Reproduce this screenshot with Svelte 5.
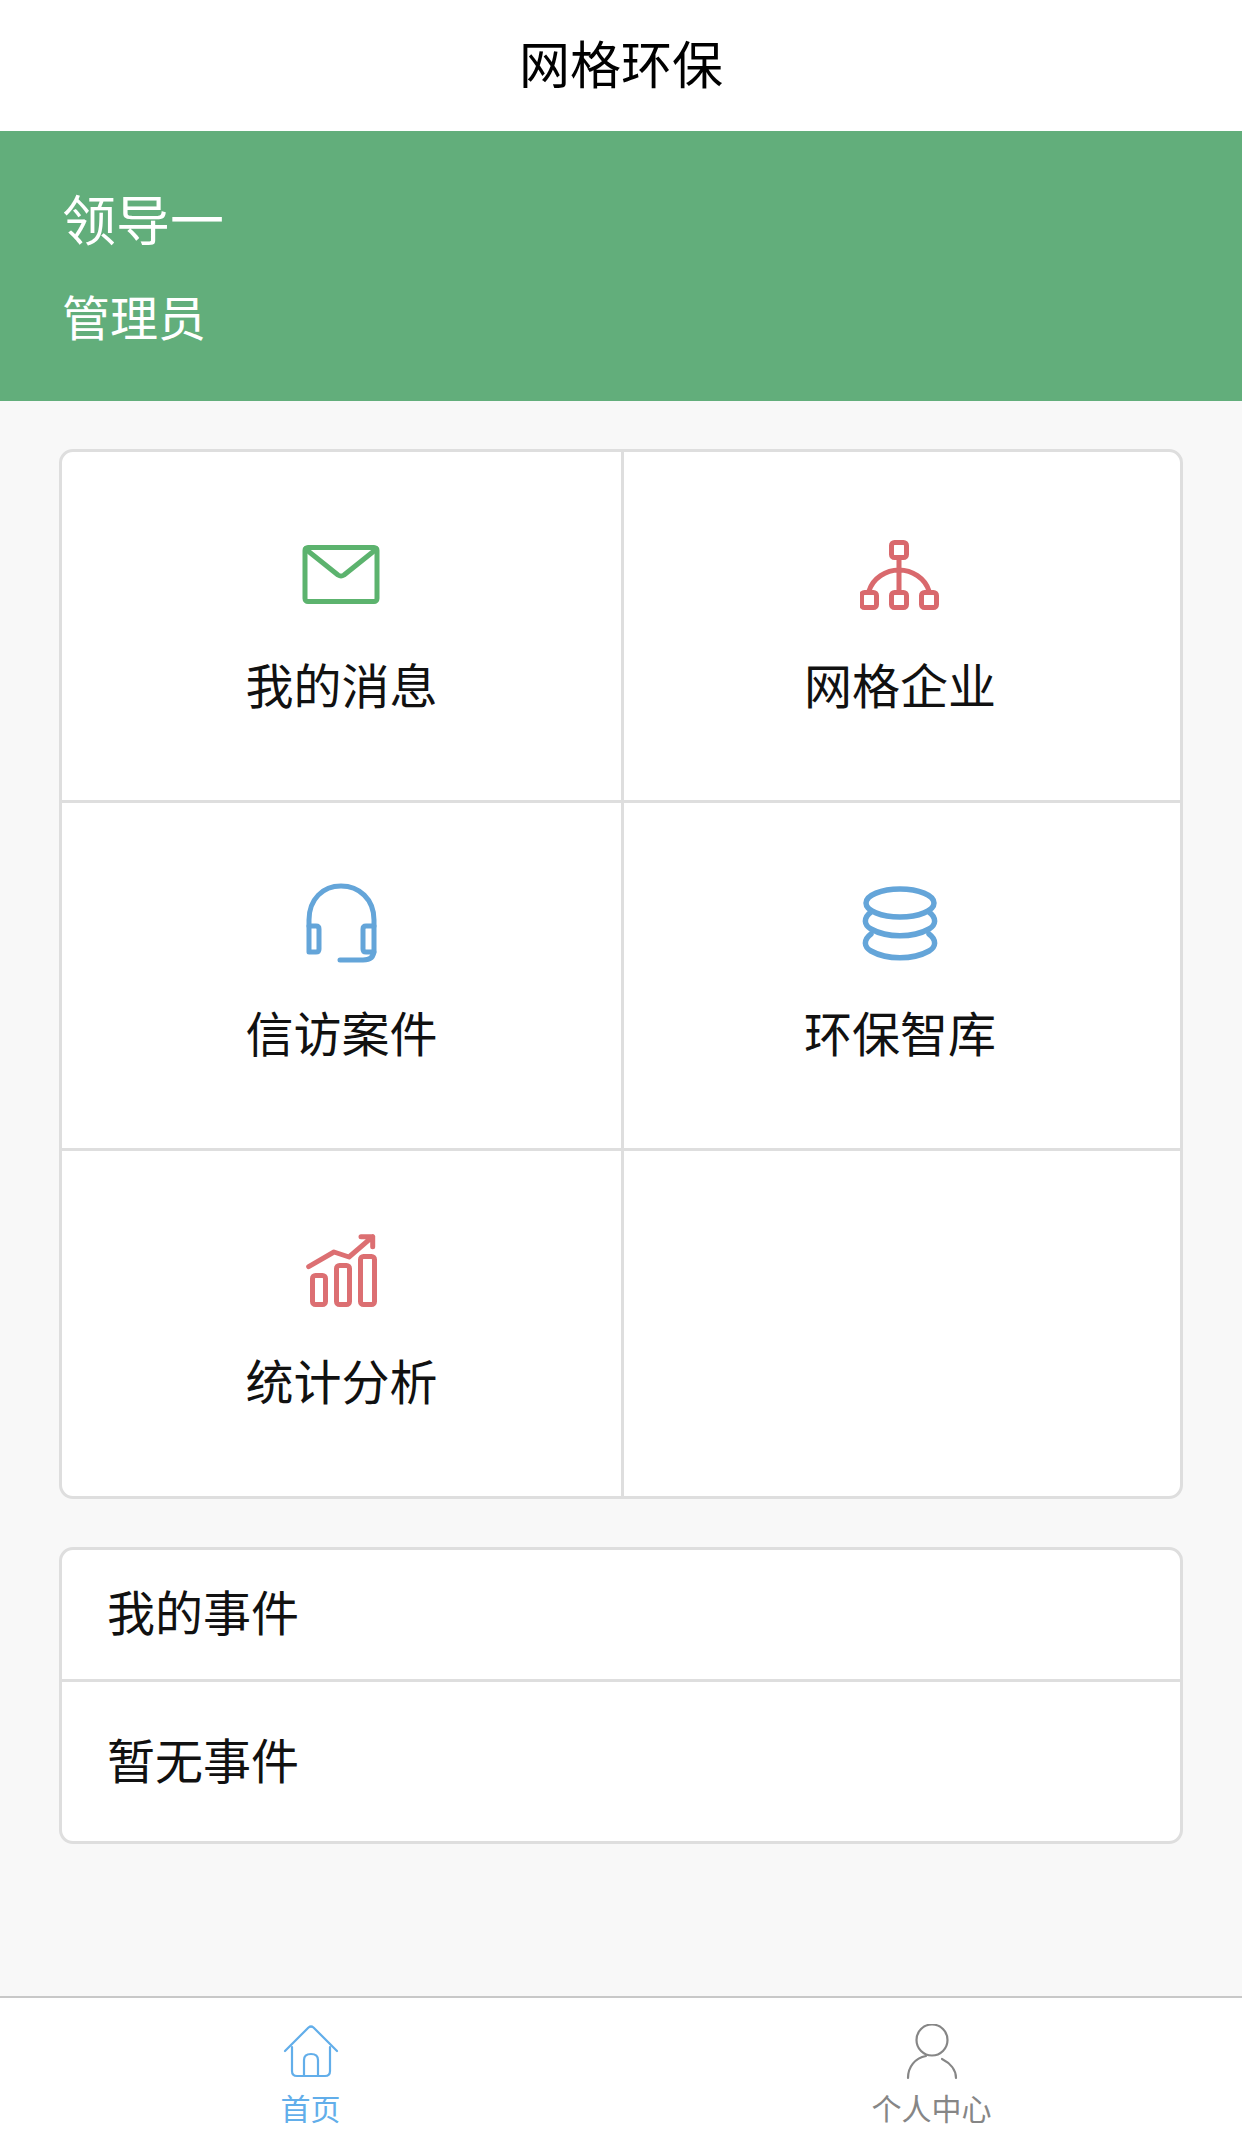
<script>
  const cells = [
    { label: '我的消息', icon: 'mail' },
    { label: '网格企业', icon: 'net' },
    { label: '信访案件', icon: 'headset' },
    { label: '环保智库', icon: 'db' },
    { label: '统计分析', icon: 'chart' },
    { label: '', icon: '' }
  ];
</script>

<div class="page">
  <header class="title">网格环保</header>

  <section class="banner">
    <div class="name">领导一</div>
    <div class="role">管理员</div>
  </section>

  <main class="content">
    <div class="grid">
      {#each cells as cell}
        <div class="cell">
          {#if cell.icon}
            <svg class="icon" viewBox="0 0 80 80" fill="none" stroke-width="5" stroke-linecap="round" stroke-linejoin="round">
              {#if cell.icon === 'mail'}
                <g stroke="#5cb36e">
                  <rect x="3" y="15.5" width="72" height="54" rx="3" />
                  <path d="M3.5 17 L36 43 Q39 45 42 43 L74.5 17" />
                </g>
              {:else if cell.icon === 'net'}
                <g stroke="#d9696d">
                  <rect x="31.5" y="10.5" width="15" height="15" rx="3" />
                  <rect x="1.5" y="60.5" width="15" height="15" rx="3" />
                  <rect x="31.5" y="60.5" width="15" height="15" rx="3" />
                  <rect x="61.5" y="60.5" width="15" height="15" rx="3" />
                  <path d="M39 25.5 V60.5 M9 59 C13 46 26 38 39 38 C52 38 65 46 69 59" />
                </g>
              {:else if cell.icon === 'headset'}
                <g stroke="#64a5d9">
                  <path d="M7 43 V37 C7 16 21 3 39 3 C57 3 72 16 72 37 V67 C72 74 68 77 61 77 H38" />
                  <path d="M7 43 H14 C16 43 17 44 17 46 V66 C17 68 16 69 14 69 H7 Z" />
                  <path d="M72 43 H64 C62 43 61 44 61 46 V66 C61 68 62 69 64 69 H72" />
                </g>
              {:else if cell.icon === 'db'}
                <g stroke="#64a5d9" stroke-width="5.5">
                  <ellipse cx="40" cy="20" rx="34" ry="14" />
                  <path d="M11 29 C3 35 4 42 11 46 C27 55 53 55 69 46 C76 42 77 35 69 29" />
                  <path d="M11 51 C3 57 4 64 11 68 C27 77 53 77 69 68 C76 64 77 57 69 51" />
                </g>
              {:else}
                <g stroke="#dc6f72">
                  <rect x="10.5" y="44.5" width="13" height="29" rx="3" />
                  <rect x="34.5" y="34.5" width="13" height="39" rx="3" />
                  <rect x="58.5" y="25.5" width="14" height="48" rx="3" />
                  <path d="M6.7 35.7 L32 21 L47 26 L70.7 5.7 M59 5.7 H70.7 V15.7" />
                </g>
              {/if}
            </svg>
            <div class="label">{cell.label}</div>
          {/if}
        </div>
      {/each}
    </div>

    <div class="events">
      <div class="event-head">我的事件</div>
      <div class="event-body">暂无事件</div>
    </div>
  </main>

  <nav class="tabs">
    <div class="tab active">
      <svg class="tab-icon" viewBox="0 0 56 56" fill="none" stroke="#62aeea" stroke-width="2.2" stroke-linecap="round" stroke-linejoin="round">
        <path d="M2 27 L25.5 3.5 Q28 1.5 30.5 3.5 L54 27" />
        <path d="M9 23 V47 Q9 52 14 52 H42 Q47 52 47 47 V23" />
        <path d="M21 52 V36 Q21 30 28 30 Q35 30 35 36 V52" />
      </svg>
      <span>首页</span>
    </div>
    <div class="tab">
      <svg class="tab-icon" viewBox="0 0 56 56" fill="none" stroke="#868686" stroke-width="2.2" stroke-linecap="round">
        <circle cx="28" cy="16" r="15.5" />
        <path d="M4 54 C4 43 11 34 22 32 M38 35 C46 39 52 46 52 54" />
      </svg>
      <span>个人中心</span>
    </div>
  </nav>
</div>

<style>
  :global(body) {
    margin: 0;
    background: #f8f8f8;
  }

  .page {
    display: flex;
    flex-direction: column;
    width: 1242px;
    height: 2147px;
    background: #f8f8f8;
    color: #111;
    font-family: "Noto Sans CJK SC", "Noto Sans", sans-serif;
    font-weight: 400;
    overflow: hidden;
  }

  .title {
    height: 131px;
    background: #fff;
    text-align: center;
    font-size: 51px;
    line-height: 124px;
    color: #000;
  }

  .banner {
    height: 270px;
    box-sizing: border-box;
    padding: 38px 62px 0;
    background: #62ae7b;
    color: #fff;
  }

  .name {
    font-size: 54px;
    line-height: 98px;
  }

  .role {
    font-size: 48px;
    line-height: 97px;
  }

  .content {
    flex: 1;
    padding: 48px 59px 0 59px;
  }

  .grid {
    display: grid;
    grid-template-columns: 562px 1fr;
    grid-template-rows: 351px 348px 348px;
    box-sizing: border-box;
    height: 1050px;
    background: #fff;
    border: 3px solid #dedede;
    border-radius: 14px;
    overflow: hidden;
  }

  .cell {
    display: flex;
    flex-direction: column;
    align-items: center;
    padding-top: 80px;
    box-sizing: border-box;
    border-right: 3px solid #dedede;
    border-bottom: 3px solid #dedede;
  }

  .cell:nth-child(2n) {
    border-right: none;
    padding-right: 4px;
  }

  .cell:nth-last-child(-n + 2) {
    border-bottom: none;
  }

  .icon {
    width: 80px;
    height: 80px;
  }

  .label {
    margin-top: 43px;
    font-size: 48px;
    line-height: 56px;
    color: #111;
  }

  .cell:nth-child(n + 3) .label {
    margin-top: 40px;
  }

  .events {
    margin-top: 48px;
    height: 297px;
    box-sizing: border-box;
    background: #fff;
    border: 3px solid #dedede;
    border-radius: 14px;
    font-size: 48px;
  }

  .event-head {
    height: 129px;
    line-height: 120px;
    padding-left: 45px;
    border-bottom: 3px solid #dedede;
  }

  .event-body {
    height: 160px;
    line-height: 152px;
    padding-left: 45px;
  }

  .tabs {
    display: grid;
    grid-template-columns: 1fr 1fr;
    height: 151px;
    box-sizing: border-box;
    background: #fff;
    border-top: 2px solid #c8c8c8;
  }

  .tab {
    display: flex;
    flex-direction: column;
    align-items: center;
    padding-top: 26px;
    font-size: 30px;
    line-height: 34px;
    color: #868686;
  }

  .tab.active {
    color: #62aeea;
  }

  .tab-icon {
    width: 56px;
    height: 56px;
    margin-bottom: 10px;
  }
</style>
